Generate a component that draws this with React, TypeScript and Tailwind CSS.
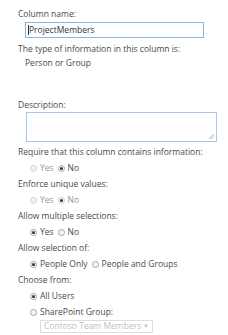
import React from "react";

function Radio({ checked, disabled }: { checked?: boolean; disabled?: boolean }) {
  return (
    <span
      className={`inline-flex items-center justify-center w-[7px] h-[7px] rounded-full border shrink-0 ${
        disabled ? "border-[#d4d4d4] bg-[#f0f0f0]" : "border-[#a8a8a8] bg-[#f4f4f4]"
      }`}
    >
      {checked && <span className="w-[3px] h-[3px] rounded-full bg-[#333]" />}
    </span>
  );
}

function Option({ label, checked, disabled }: { label: string; checked?: boolean; disabled?: boolean }) {
  return (
    <span className="inline-flex items-center gap-[3px] mr-[4px]">
      <Radio checked={checked} disabled={disabled} />
      <span className={disabled ? "text-[#999]" : ""}>{label}</span>
    </span>
  );
}

function Label({ children, className = "" }: { children: React.ReactNode; className?: string }) {
  return <div className={`h-[16px] leading-[16px] ${className}`}>{children}</div>;
}

function Row({ children, className = "" }: { children: React.ReactNode; className?: string }) {
  return <div className={`h-[16px] flex items-center pl-[12px] ${className}`}>{children}</div>;
}

export default function App() {
  return (
    <div
      className="w-[228px] h-[335px] bg-white text-[#4a4a4a] text-[8.5px] pl-[18px] pt-[6px] overflow-hidden"
      style={{ fontFamily: '"Open Sans", "Noto Sans", sans-serif' }}
    >
      <Label>Column name:</Label>
      <div className="ml-[7px] w-[179px] h-[16px] border border-[#8ab6e2] flex items-center pl-[2px] text-[#333]">
        <span className="w-px h-[10px] bg-[#333]" />
        ProjectMembers
      </div>
      <div className="h-[14px] leading-[14px] mt-[4px]">The type of information in this column is:</div>
      <div className="h-[14px] leading-[14px] pl-[7px]">Person or Group</div>

      <div className="h-[14px] leading-[14px] mt-[28px]">Description:</div>
      <div className="relative ml-[8px] w-[191px] h-[30px] border border-[#a9c6e6]">
        <svg className="absolute right-[1px] bottom-[1px]" width="7" height="7" viewBox="0 0 7 7">
          <path d="M6 1 L1 6 M6 3.5 L3.5 6" stroke="#999" strokeWidth="0.8" />
        </svg>
      </div>

      <Label className="mt-[2px]">Require that this column contains information:</Label>
      <Row>
        <Option label="Yes" disabled />
        <Option label="No" checked />
      </Row>
      <Label>Enforce unique values:</Label>
      <Row>
        <Option label="Yes" disabled />
        <Option label="No" checked disabled />
      </Row>
      <Label>Allow multiple selections:</Label>
      <Row>
        <Option label="Yes" checked />
        <Option label="No" />
      </Row>
      <Label>Allow selection of:</Label>
      <Row>
        <Option label="People Only" checked />
        <Option label="People and Groups" />
      </Row>
      <Label>Choose from:</Label>
      <Row>
        <Option label="All Users" checked />
      </Row>
      <Row className="h-[13px]">
        <Option label="SharePoint Group:" />
      </Row>
      <div className="ml-[22px] w-[113px] h-[13px] border border-[#ddd] flex items-center justify-between px-[3px] text-[#c0c0c0] whitespace-nowrap overflow-hidden">
        <span>Contoso Team Members</span>
        <span className="text-[6px]">▼</span>
      </div>
    </div>
  );
}
